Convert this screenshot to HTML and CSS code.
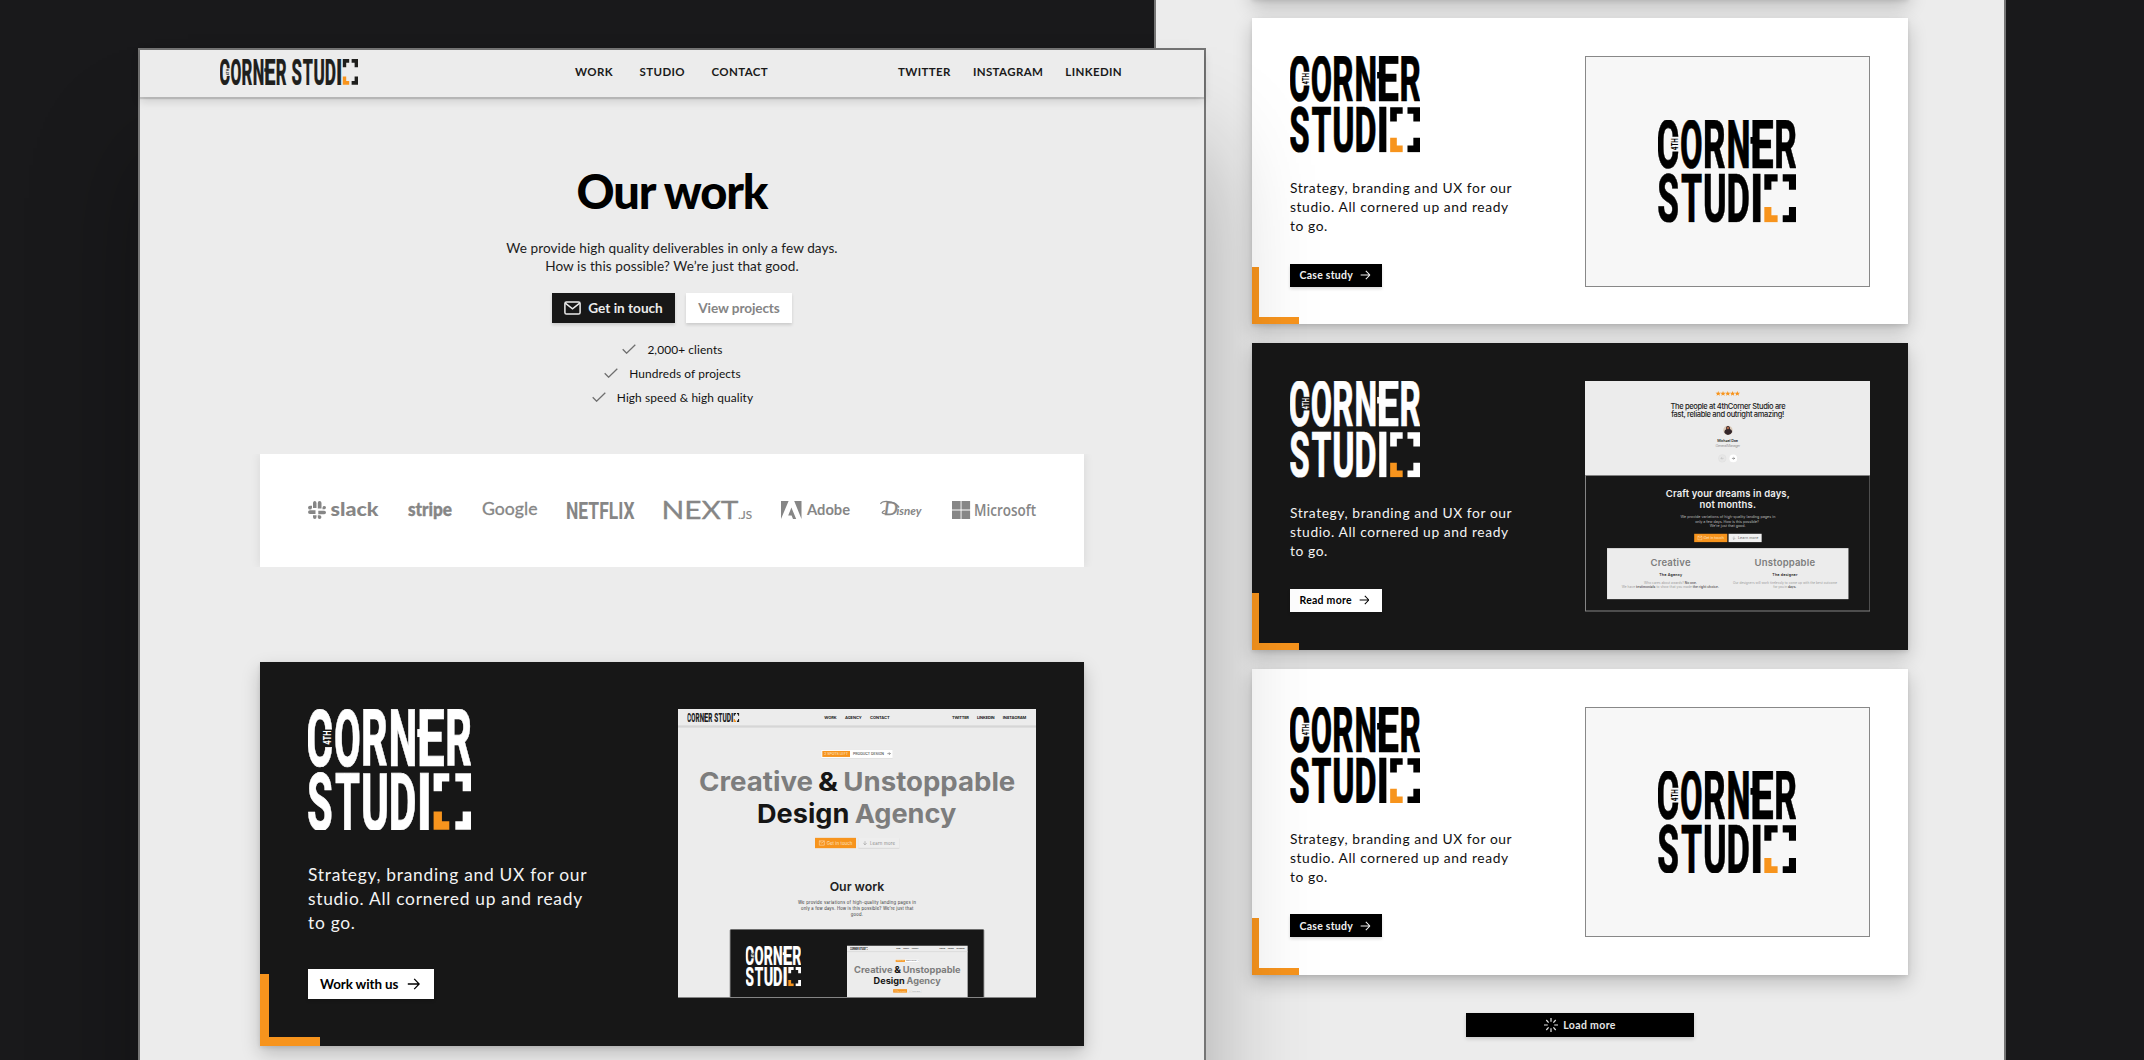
FILE: index.html
```html
<!DOCTYPE html>
<html lang="en">
<head>
<meta charset="utf-8">
<title>Corner Studio – Our work</title>
<link rel="stylesheet" href="styles.css">
</head>
<body>
<svg class="sprite" aria-hidden="true">
  <defs>
    <g id="corner" class="wordmark">
      <text x="-5" y="169" textLength="80" lengthAdjust="spacingAndGlyphs">C</text>
      <text x="78" y="169" textLength="80" lengthAdjust="spacingAndGlyphs">O</text>
      <text x="159" y="169" textLength="80" lengthAdjust="spacingAndGlyphs">R</text>
      <text x="242" y="169" textLength="85" lengthAdjust="spacingAndGlyphs">N</text>
      <text x="326" y="169" textLength="83" lengthAdjust="spacingAndGlyphs">E</text>
      <text x="411" y="169" textLength="80" lengthAdjust="spacingAndGlyphs">R</text>
      <path d="M327 60h12v24h-12z"/>
      <text class="wordmark-4th" transform="translate(70 107) rotate(-90)" textLength="43" lengthAdjust="spacingAndGlyphs">4TH</text>
    </g>
    <g id="studio" class="wordmark">
      <text x="-3" y="169" textLength="77" lengthAdjust="spacingAndGlyphs">S</text>
      <text x="81" y="169" textLength="75" lengthAdjust="spacingAndGlyphs">T</text>
      <text x="159" y="169" textLength="84" lengthAdjust="spacingAndGlyphs">U</text>
      <text x="242" y="169" textLength="83" lengthAdjust="spacingAndGlyphs">D</text>
      <text x="325" y="169" textLength="47" lengthAdjust="spacingAndGlyphs">I</text>
      <path d="M376 0h47v25h-22v29h-25zM441 0h47v54h-25v-29h-22zM463 115h25v54h-47v-25h22z"/>
      <path fill="#f7941d" d="M376 115h25v29h22v25h-47z"/>
    </g>
    <symbol id="logo" viewBox="0 0 488 362" preserveAspectRatio="none">
      <use href="#corner"/><use href="#studio" y="192"/>
    </symbol>
    <symbol id="logo-line" viewBox="0 0 1018 170" preserveAspectRatio="none">
      <use href="#corner"/><use href="#studio" x="530"/>
    </symbol>
    <symbol id="arrow" viewBox="0 0 13 12">
      <path d="M.8 6h11.4M7.2 .9 12.2 6l-5 5.1" fill="none" stroke="currentColor" stroke-width="1.3"/>
    </symbol>
    <symbol id="check" viewBox="0 0 14 10">
      <path d="M.7 5.2 4.6 9.2 13.3.7" fill="none" stroke="#6f6f6f" stroke-width="1.3"/>
    </symbol>

    <!-- Agency home page, reused at a smaller scale inside its own hero -->
    <g id="home">
      <rect x="54" y="57" width="1074" height="868" fill="#ececec"/>
      <rect x="54" y="107" width="1074" height="3" fill="#c4c4c4"/>
      <rect x="54" y="110" width="1074" height="4" fill="#dedede"/>
      <use href="#logo-line" x="82" y="69" width="156" height="27" color="#1b1b1b"/>
      <g class="t-nav">
        <text x="493" y="88" textLength="37">WORK</text><text x="555" y="88" textLength="50">AGENCY</text><text x="630" y="88" textLength="59">CONTACT</text>
        <text x="876" y="88" textLength="51">TWITTER</text><text x="951" y="88" textLength="53">LINKEDIN</text><text x="1028" y="88" textLength="71">INSTAGRAM</text>
      </g>
      <rect x="484" y="180" width="214" height="26" fill="#dcdcdc"/>
      <rect x="484" y="180" width="214" height="24" fill="#fff"/>
      <rect x="487" y="183" width="83" height="18" fill="#f7941d"/>
      <text class="t-tag" x="493" y="195" textLength="71" fill="#fbe3c4">2 SPOTS LEFT</text>
      <text class="t-tag" x="579" y="195" textLength="93" fill="#444">PRODUCT DESIGN</text>
      <path d="M682 191h9m-4-4 4 4-4 4" fill="none" stroke="#444" stroke-width="1.5"/>
      <g class="t-hero">
        <text x="117" y="303" textLength="342" lengthAdjust="spacingAndGlyphs">Creative</text>
        <text x="474" y="303" textLength="60" lengthAdjust="spacingAndGlyphs" fill="#151515">&amp;</text>
        <text x="550" y="303" textLength="516" lengthAdjust="spacingAndGlyphs">Unstoppable</text>
        <text x="291" y="399" textLength="277" lengthAdjust="spacingAndGlyphs" fill="#151515">Design</text>
        <text x="584" y="399" textLength="305" lengthAdjust="spacingAndGlyphs">Agency</text>
      </g>
      <rect x="465" y="444" width="123" height="31" fill="#f7941d"/>
      <rect x="595" y="446" width="123" height="31" fill="#d9d9d9"/>
      <rect x="595" y="444" width="123" height="30" fill="#eee"/>
      <path d="M478 453h15v13h-15zl7.500 7 7.500-7" fill="none" stroke="#fbdcb4" stroke-width="1.800"/>
      <path d="M615 454v11m-5-5 5 5 5-5" fill="none" stroke="#8a8a8a" stroke-width="1.500"/>
      <text class="t-btn" x="500" y="465" textLength="77" fill="#fde8cc">Get in touch</text>
      <text class="t-btn" x="630" y="465" textLength="75" fill="#8a8a8a">Learn more</text>
    </g>
  </defs>
</svg>

<section class="window window-back">
  <div class="card card-small card-dark card-stub"></div>

  <article class="card card-small card-light">
    <div class="card-info">
      <svg class="card-logo"><use href="#logo"/></svg>
      <p>Strategy, branding and UX for our<br>studio. All cornered up and ready<br>to go.</p>
      <a class="btn btn-black">Case study<svg class="arrow"><use href="#arrow"/></svg></a>
    </div>
    <div class="card-shot shot-logo"><svg><use href="#logo"/></svg></div>
  </article>

  <article class="card card-small card-dark">
    <div class="card-info">
      <svg class="card-logo"><use href="#logo"/></svg>
      <p>Strategy, branding and UX for our<br>studio. All cornered up and ready<br>to go.</p>
      <a class="btn btn-white">Read more<svg class="arrow"><use href="#arrow"/></svg></a>
    </div>
    <svg class="card-shot" viewBox="45 34 855 691" preserveAspectRatio="none">
      <rect x="45" y="34" width="855" height="691" fill="#171717"/>
      <rect x="46.500" y="317" width="852" height="406.500" fill="none" stroke="#858585" stroke-width="3"/>
      <rect x="45" y="34" width="855" height="282" fill="#ececec"/>
      <path fill="#f7941d" d="M444 64l2 5 6 .5-4.500 3.500 1.500 5.500-5-3-5 3 1.500-5.500-4.500-3.500 6-.5zm14.300 0l2 5 6 .5-4.500 3.500 1.500 5.500-5-3-5 3 1.500-5.500-4.500-3.500 6-.5zm14.300 0l2 5 6 .5-4.500 3.500 1.500 5.500-5-3-5 3 1.500-5.500-4.500-3.500 6-.5zm14.300 0l2 5 6 .5-4.500 3.500 1.500 5.500-5-3-5 3 1.500-5.500-4.500-3.500 6-.5zm14.300 0l2 5 6 .5-4.500 3.500 1.500 5.500-5-3-5 3 1.500-5.500-4.500-3.500 6-.5z"/>
      <g class="t-quote">
        <text x="301" y="118" textLength="345">The people at 4thCorner Studio are</text>
        <text x="303" y="143" textLength="339">fast, reliable and outright amazing!</text>
      </g>
      <circle cx="473" cy="182" r="14" fill="#d9c9b8"/>
      <path d="M462 188q1-8 6-9-2-9 5-10 7 1 6 9 6 2 7 9-5 9-13 9-8-1-11-8z" fill="#33262a"/>
      <circle cx="473" cy="175" r="3.500" fill="#b0694a"/>
      <text class="t-small" x="441" y="216" textLength="62" fill="#333" font-weight="600">Michael Doe</text>
      <text class="t-small" x="436" y="232" textLength="74" fill="#9a9a9a">General Manager</text>
      <circle cx="456" cy="266" r="11.500" fill="#e6e6e6" stroke="#dadada"/>
      <circle cx="489" cy="266" r="11.500" fill="#fff"/>
      <path d="M460 266h-8m3.500-3.500-3.500 3.500 3.500 3.500" fill="none" stroke="#b5b5b5" stroke-width="1.500"/>
      <path d="M485 266h8m-3.500-3.500 3.500 3.500-3.500 3.500" fill="none" stroke="#444" stroke-width="1.500"/>
      <g class="t-craft">
        <text x="287" y="382" textLength="371">Craft your dreams in days,</text>
        <text x="388" y="414" textLength="169">not months.</text>
      </g>
      <g class="t-small" fill="#bdbdbd">
        <text x="331" y="444" textLength="284">We provide variations of high-quality landing pages in</text>
        <text x="375" y="459" textLength="191">only a few days. How is this possible?</text>
        <text x="419" y="473" textLength="107">We’re just that good.</text>
      </g>
      <rect x="372" y="492" width="99" height="25" fill="#f7941d"/>
      <rect x="475" y="492" width="99" height="25" fill="#f1f1f1"/>
      <path d="M383 499h12v11h-12zl6 5.500 6-5.500" fill="none" stroke="#fbdcb4" stroke-width="1.500"/>
      <path d="M491 500v9m-4-4 4 4 4-4" fill="none" stroke="#888" stroke-width="1.300"/>
      <text class="t-small" x="400" y="508" textLength="61" fill="#fde8cc">Get in touch</text>
      <text class="t-small" x="503" y="508" textLength="61" fill="#666">Learn more</text>
      <rect x="111" y="535" width="723" height="153" fill="#ececec"/>
      <g class="t-craft t-grey">
        <text x="241" y="590" textLength="120">Creative</text>
        <text x="553" y="590" textLength="181">Unstoppable</text>
      </g>
      <g class="t-small" font-weight="600" fill="#2a2a2a">
        <text x="267" y="619" textLength="69">The Agency</text>
        <text x="606" y="619" textLength="75">The designer</text>
      </g>
      <g class="t-fine">
        <text x="222" y="642" textLength="158">Who cares about awards? <tspan>No one.</tspan></text>
        <text x="155" y="655" textLength="291">We have <tspan>testimonials</tspan> to show that you made <tspan>the right choice.</tspan></text>
        <text x="488" y="642" textLength="312">Our designers will work tirelessly to come up with the best outcome</text>
        <text x="609" y="655" textLength="69">for you in <tspan>days.</tspan></text>
      </g>
    </svg>
  </article>

  <article class="card card-small card-light">
    <div class="card-info">
      <svg class="card-logo"><use href="#logo"/></svg>
      <p>Strategy, branding and UX for our<br>studio. All cornered up and ready<br>to go.</p>
      <a class="btn btn-black">Case study<svg class="arrow"><use href="#arrow"/></svg></a>
    </div>
    <div class="card-shot shot-logo"><svg><use href="#logo"/></svg></div>
  </article>

  <a class="load-more">
    <svg viewBox="0 0 14 14"><path d="M7 0v3.800M7 10.200V14M0 7h3.800M10.200 7H14M2.300 2l2.300 2.700M9.400 9.300l2.300 2.700M11.700 2 9.400 4.700M4.600 9.300 2.300 12" fill="none" stroke="currentColor" stroke-width="1.200"/></svg>
    Load more
  </a>
</section>

<main class="window window-front">
  <header class="header">
    <svg class="header-logo"><use href="#logo-line"/></svg>
    <nav class="nav-main"><a>WORK</a><a>STUDIO</a><a>CONTACT</a></nav>
    <nav class="nav-social"><a>TWITTER</a><a>INSTAGRAM</a><a>LINKEDIN</a></nav>
  </header>

  <section class="hero">
    <h1>Our work</h1>
    <p>We provide high quality deliverables in only a few days.<br>How is this possible? We’re just that good.</p>
    <div class="actions">
      <a class="btn btn-ink"><svg class="mail" viewBox="0 0 17 14"><rect x=".9" y=".9" width="15.200" height="12.200" rx="1.600" fill="none" stroke="currentColor" stroke-width="1.500"/><path d="M1.300 2.200 8.500 7.800l7.200-5.600" fill="none" stroke="currentColor" stroke-width="1.500"/></svg>Get in touch</a>
      <a class="btn btn-white btn-muted">View projects</a>
    </div>
    <ul class="checks">
      <li><svg><use href="#check"/></svg>2,000+ clients</li>
      <li><svg><use href="#check"/></svg>Hundreds of projects</li>
      <li><svg><use href="#check"/></svg>High speed &amp; high quality</li>
    </ul>
  </section>

  <section class="brands">
    <svg width="71" height="18" viewBox="0 0 71 18">
      <path d="M6.500 0a2 2 0 0 1 2 2v5h-3.500v-5a2 2 0 0 1 1.500-2zM11.500 0a2 2 0 0 1 2 2v5.500h-3.700V2a2 2 0 0 1 1.700-2zM0 6.500a2 2 0 0 1 2-1.800h2v1.800a2 2 0 0 1-4 0zM18 6.500a1.800 1.800 0 0 1-1.800 1.800h-1.700V6.500a1.800 1.800 0 0 1 3.500 0zM0 11a2 2 0 0 1 2-1.800h5.500V13H2a2 2 0 0 1-2-2zM18 11.500a1.800 1.800 0 0 1-1.800 1.800H10.300V9.700h5.900A1.800 1.800 0 0 1 18 11.500zM5 14.300h3.500V16a1.750 2 0 0 1-3.500 0zM9.800 14.300h1.900A1.800 1.850 0 1 1 9.800 16z"/>
      <text x="22.500" y="14.700" font-size="19.500" font-weight="900" textLength="48" lengthAdjust="spacingAndGlyphs">slack</text>
    </svg>
    <svg width="44" height="18" viewBox="0 0 44 18"><text x="0" y="14.500" font-size="19" font-weight="900" textLength="44" lengthAdjust="spacingAndGlyphs" stroke="#868686" stroke-width=".4">stripe</text></svg>
    <svg width="55.500" height="18" viewBox="0 0 55.500 18"><text x="0" y="13.500" font-size="18" textLength="55.500" lengthAdjust="spacingAndGlyphs" stroke="#868686" stroke-width=".3">Google</text></svg>
    <svg width="66.500" height="18" viewBox="0 0 66.500 18"><text x="-1" y="17.500" font-family="Roboto" font-size="24.500" font-weight="700" textLength="68.500" lengthAdjust="spacingAndGlyphs">NETFLIX</text></svg>
    <svg width="89" height="18" viewBox="0 0 89 18">
      <text x="-1.500" y="17.800" font-size="24.500" textLength="77" lengthAdjust="spacingAndGlyphs" stroke="#868686" stroke-width=".3">NEXT</text>
      <text x="75" y="17.800" font-size="11.500" textLength="14" lengthAdjust="spacingAndGlyphs" stroke="#868686" stroke-width=".2">.JS</text>
    </svg>
    <svg width="69" height="18" viewBox="0 0 69 18">
      <path d="M0 0h7.600L0 18zM13.200 0h7.300v18zM10.400 6.600 15.200 18h-3.200l-1.400-3.600H7.200z"/>
      <text x="26" y="14.400" font-size="15.500" font-weight="700" textLength="43" lengthAdjust="spacingAndGlyphs">Adobe</text>
    </svg>
    <svg width="43" height="18" viewBox="0 0 43 18">
      <text x="4" y="14" font-size="17" font-style="italic" font-weight="400" stroke="#868686" stroke-width=".3" textLength="14" lengthAdjust="spacingAndGlyphs">D</text>
      <text x="16.500" y="13.500" font-size="12" font-style="italic" font-weight="700" textLength="25" lengthAdjust="spacingAndGlyphs">isney</text>
      <path d="M.5 3C2-.5 13-1 18.500 5.500M5 9.500c-4 1.500-4 3.500 2 3.200" fill="none" stroke="#868686" stroke-width="1.200"/>
    </svg>
    <svg width="84" height="18" viewBox="0 0 84 18">
      <path d="M0 0h8.600v8.600H0zM9.500 0h8.600v8.600H9.500zM0 9.500h8.600V18H0zM9.500 9.500h8.600V18H9.500z"/>
      <text x="22" y="14.500" font-size="15.500" font-family="Open Sans" font-weight="600" textLength="62" lengthAdjust="spacingAndGlyphs">Microsoft</text>
    </svg>
  </section>

  <article class="card card-dark card-large">
    <div class="card-info">
      <svg class="card-logo"><use href="#logo"/></svg>
      <p>Strategy, branding and UX for our<br>studio. All cornered up and ready<br>to go.</p>
      <a class="btn btn-white">Work with us<svg class="arrow"><use href="#arrow"/></svg></a>
    </div>
    <svg class="card-shot" viewBox="54 57 1074 868" preserveAspectRatio="none">
      <use href="#home"/>
      <text class="t-sub" x="509" y="604" textLength="164">Our work</text>
      <g class="t-para">
        <text x="414" y="642" textLength="354">We provide variations of high-quality landing pages in</text>
        <text x="423" y="661" textLength="337">only a few days. How is this possible? We’re just that</text>
        <text x="572" y="679" textLength="37">good.</text>
      </g>
      <rect x="207" y="721" width="768" height="204" fill="#c9c9c9"/>
      <rect x="211" y="719" width="760" height="206" fill="#171717"/>
      <use href="#logo" x="257" y="767" width="166" height="123" color="#fff"/>
      <use href="#home" transform="translate(542.800 748.800) scale(.337)"/>
      <rect x="54" y="922" width="1074" height="3" fill="#858585"/>
    </svg>
  </article>
</main>
</body>
</html>
```
FILE: styles.css
```css
*, *::after { box-sizing: border-box; }

body {
  position: relative;
  width: 2144px;
  height: 1060px;
  margin: 0;
  overflow: hidden;
  background: #19191b;
  font-family: Lato, "Liberation Sans", sans-serif;
  color: #000;
}

p, h1, ul { margin: 0; padding: 0; font-weight: 400; }
svg { display: block; flex: none; }
.sprite { position: absolute; width: 0; height: 0; }

.wordmark { fill: currentColor; font-family: Roboto, sans-serif; font-weight: 800; font-size: 236px; }
.wordmark text { stroke: currentColor; stroke-width: 2px; }
.wordmark .wordmark-4th { font-size: 32px; font-weight: 700; stroke: none; }

/* Overlapping windows */
.window { position: absolute; background: #ececec; border: 2px solid #757575; }
.window-back {
  left: 1154px;
  top: -300px;
  width: 852px;
  height: 1400px;
  border-top: 0;
  display: flex;
  flex-direction: column;
  align-items: center;
  gap: 19px;
}
.window-front {
  left: 138px;
  top: 48px;
  width: 1068px;
  height: 1060px;
  box-shadow: 0 100px 100px rgba(0, 0, 0, .3);
}

/* Header */
.header {
  display: grid;
  grid-template-columns: 355px 323px auto;
  align-items: center;
  height: 47px;
  padding: 0 0 3px 80px;
  box-shadow: 0 2px 1px rgba(0, 0, 0, .14), 0 4px 9px rgba(0, 0, 0, .14);
}
.header-logo { width: 138px; height: 26px; color: #1f1f1d; }
.header nav { display: flex; gap: 26.5px; font-size: 11.5px; font-weight: 700; letter-spacing: .38px; color: #1a1a1a; padding-bottom: 1px; }
.header .nav-social { gap: 22px; }

/* Hero */
.hero { display: flex; flex-direction: column; align-items: center; padding-top: 66px; text-align: center; }
h1 { font-size: 47px; line-height: 56px; font-weight: 900; letter-spacing: -1.1px; }
.hero p { margin-top: 19.5px; font-size: 13.6px; line-height: 18px; letter-spacing: .06px; color: #1c1c1c; }
.actions { display: flex; gap: 11.5px; margin-top: 18.5px; }
.btn {
  display: flex;
  align-items: center;
  width: max-content;
  height: 30px;
  padding: 0 12px;
  font-size: 13.6px;
  line-height: 18px;
  font-weight: 700;
  white-space: nowrap;
  box-shadow: 0 2px 3px rgba(0, 0, 0, .14);
}
.btn-ink { background: #171717; color: #ececec; }
.btn-black { background: #000; color: #f2f2f2; }
.btn-white { background: #fff; color: #000; }
.btn-muted { color: #858585; letter-spacing: -.1px; }
.mail { width: 17px; height: 14px; margin-right: 7px; }

.checks { list-style: none; margin-top: 14px; display: flex; flex-direction: column; align-items: center; }
.checks li { display: flex; align-items: center; gap: 11px; height: 24px; padding-left: 1px; font-size: 11.9px; letter-spacing: .1px; color: #111; }
.checks svg { width: 14px; height: 10px; }

/* Brands */
.brands {
  display: flex;
  align-items: center;
  justify-content: space-between;
  width: 824px;
  height: 113px;
  margin: 45px auto 0;
  padding: 0 47.5px 1px;
  background: #fff;
  box-shadow: 0 0 10px rgba(0, 0, 0, .09);
  clip-path: inset(0 -20px);
}
.brands svg { fill: #868686; overflow: visible; }

/* Project cards */
.card {
  position: relative;
  display: flex;
  justify-content: space-between;
  box-shadow: 0 8px 18px rgba(0, 0, 0, .2), 0 2px 4px rgba(0, 0, 0, .1);
}
.card::after {
  content: "";
  position: absolute;
  left: 0;
  bottom: 0;
  border: solid #f7941d;
  border-width: 0 0 9px 9px;
  width: 60px;
  height: 72px;
}
.card-dark { background: #171717; color: #f3f3f3; }
.card-light { background: #fff; color: #111; }
.card-dark .card-logo { color: #fff; }
.card-logo { color: #000; }

.card-large { width: 824px; height: 384px; margin: 95px auto 0; padding: 47px 48px; }
.card-large .card-logo { width: 163px; height: 121px; }
.card-large p { margin-top: 33px; font-size: 17.4px; line-height: 24px; letter-spacing: .72px; }
.card-large .btn { width: 126px; margin-top: 34px; font-size: 13.4px; letter-spacing: -.1px; }
.card-large .arrow { width: 13px; height: 12px; margin-left: 9px; }
.card-large .card-shot { width: 358px; height: 289px; }

.card-small { width: 656px; height: 306.3px; padding: 38px; flex: none; }
.card-small .card-logo { width: 130px; height: 96.5px; }
.card-small p { margin-top: 25.5px; font-size: 13.8px; line-height: 19.1px; letter-spacing: .59px; }
.card-small .btn { margin-top: 28.3px; width: 92px; height: 23px; padding: 0 0 0 9.5px; font-size: 10.5px; letter-spacing: .25px; }
.card-small .arrow { width: 10.5px; height: 10px; margin-left: 7px; }
.card-small .card-shot { width: 285.5px; height: 230.5px; }
.card-small::after { width: 47px; height: 57px; border-width: 0 0 7px 7px; }
.card-stub { height: 299px; }
.shot-logo { display: flex; align-items: center; justify-content: center; background: #f7f7f7; border: 1px solid #888; }
.shot-logo svg { width: 138px; height: 102.5px; color: #000; }

.load-more {
  display: flex;
  align-items: center;
  justify-content: center;
  gap: 5px;
  width: 228px;
  height: 24.5px;
  margin-top: 19px;
  background: #000;
  color: #e6e6e6;
  font-size: 10.5px;
  font-weight: 700;
  letter-spacing: .35px;
  box-shadow: 0 2px 4px rgba(0, 0, 0, .15);
}
.load-more svg { width: 14px; height: 14px; }

/* Screenshot lettering */
.card-shot text, #home text { font-family: Inter, sans-serif; }
#home .wordmark text, .card-shot .wordmark text { font-family: Roboto, sans-serif; }
#home .t-nav { font-size: 12px; font-weight: 700; fill: #222; }
.t-tag { font-size: 10.5px; font-weight: 500; }
.t-hero { font-size: 79px; font-weight: 700; fill: #7d7d7d; }
.t-btn { font-size: 13px; }
.t-sub { font-size: 37px; font-weight: 600; fill: #222; }
.t-para { font-size: 12.5px; fill: #333; }
.t-quote { font-size: 22.5px; font-weight: 500; fill: #1c1c1c; }
.t-small { font-size: 11px; }
.t-craft { font-size: 28.5px; font-weight: 600; fill: #f0f0f0; }
.t-craft.t-grey { fill: #7d7d7d; }
.t-fine { font-size: 9.5px; fill: #9a9a9a; }
.t-fine tspan { font-weight: 600; fill: #555; }
```
